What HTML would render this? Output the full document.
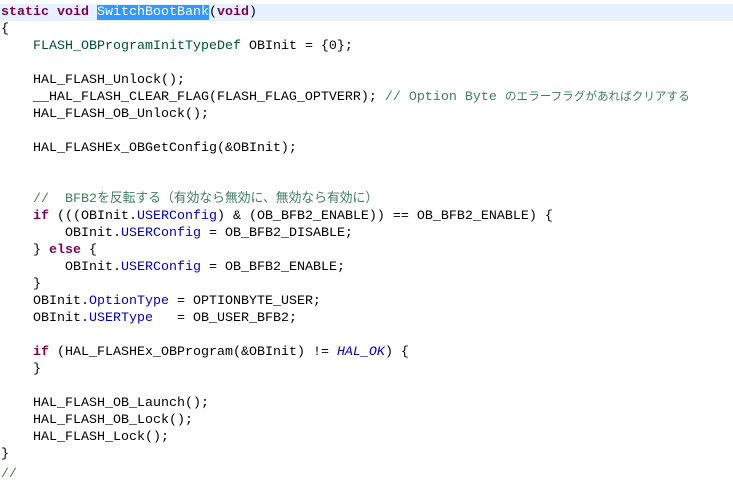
<!DOCTYPE html>
<html><head><meta charset="utf-8"><style>
html,body{margin:0;padding:0;background:#fff;width:733px;height:468px;overflow:hidden;}
.l{position:absolute;left:1px;height:17px;line-height:17px;white-space:pre;font-family:"Liberation Mono",monospace;font-size:13.33px;color:#000;overflow:visible;}
.k{color:#7f0055;font-weight:bold;}
.t{color:#005032;}
.f{color:#0000c0;}
.i{color:#0000c0;font-style:italic;}
.c{color:#3f7f5f;}
.j{font-family:"Noto Sans CJK JP",sans-serif;font-size:11.6px;color:#3f7f5f;line-height:1;}
.j2{font-size:12.8px;}
.sel{background:#3399ff;color:#fff;}
#cur{position:absolute;left:0;top:4px;width:733px;height:17px;background:#e8f2fe;}
</style></head><body>
<div id="cur"></div>
<div class="l" style="top:4px"><span class="k">static</span> <span class="k">void</span> <span class="sel">SwitchBootBank</span>(<span class="k">void</span>)</div>
<div class="l" style="top:21px">{</div>
<div class="l" style="top:38px">    <span class="t">FLASH_OBProgramInitTypeDef</span> OBInit = {0};</div>
<div class="l" style="top:72px">    HAL_FLASH_Unlock();</div>
<div class="l" style="top:89px">    __HAL_FLASH_CLEAR_FLAG(FLASH_FLAG_OPTVERR); <span class="c">// Option Byte </span><span class="j">のエラーフラグがあればクリアする</span></div>
<div class="l" style="top:106px">    HAL_FLASH_OB_Unlock();</div>
<div class="l" style="top:140px">    HAL_FLASHEx_OBGetConfig(&amp;OBInit);</div>
<div class="l" style="top:191px">    <span class="c">//  BFB2</span><span class="j j2">を反転する（有効なら無効に、無効なら有効に）</span></div>
<div class="l" style="top:208px">    <span class="k">if</span> (((OBInit.<span class="f">USERConfig</span>) &amp; (OB_BFB2_ENABLE)) == OB_BFB2_ENABLE) {</div>
<div class="l" style="top:225px">        OBInit.<span class="f">USERConfig</span> = OB_BFB2_DISABLE;</div>
<div class="l" style="top:242px">    } <span class="k">else</span> {</div>
<div class="l" style="top:259px">        OBInit.<span class="f">USERConfig</span> = OB_BFB2_ENABLE;</div>
<div class="l" style="top:276px">    }</div>
<div class="l" style="top:293px">    OBInit.<span class="f">OptionType</span> = OPTIONBYTE_USER;</div>
<div class="l" style="top:310px">    OBInit.<span class="f">USERType</span>   = OB_USER_BFB2;</div>
<div class="l" style="top:344px">    <span class="k">if</span> (HAL_FLASHEx_OBProgram(&amp;OBInit) != <span class="i">HAL_OK</span>) {</div>
<div class="l" style="top:361px">    }</div>
<div class="l" style="top:395px">    HAL_FLASH_OB_Launch();</div>
<div class="l" style="top:412px">    HAL_FLASH_OB_Lock();</div>
<div class="l" style="top:429px">    HAL_FLASH_Lock();</div>
<div class="l" style="top:446px">}</div>
<div class="l" style="top:466px"><span class="c">//</span></div>
</body></html>
